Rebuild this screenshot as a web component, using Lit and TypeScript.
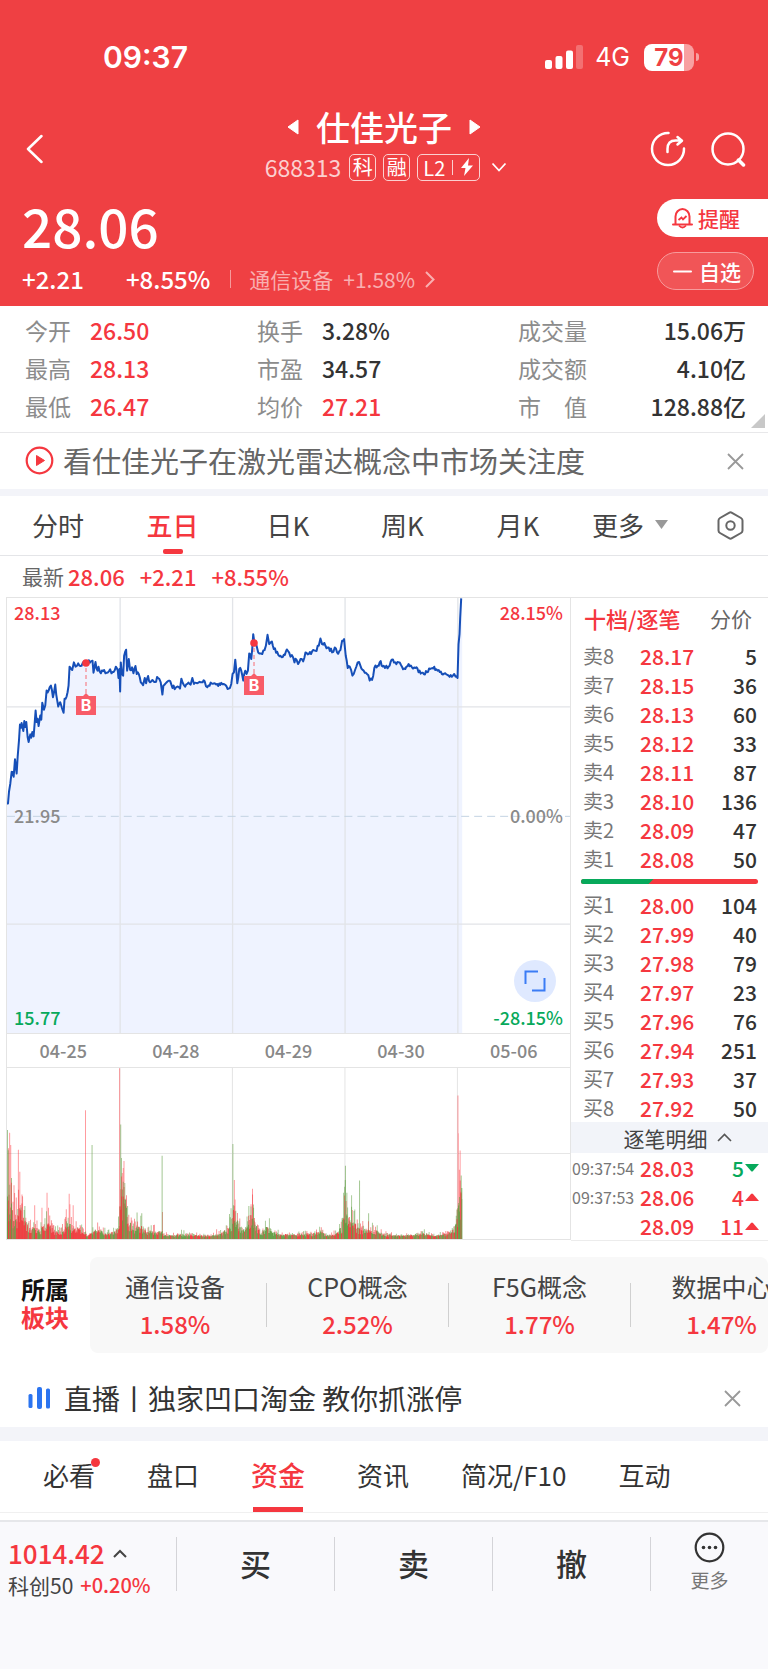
import { LitElement, html, css } from "lit";
import { customElement } from "lit/decorators.js";

type Point = [number, number];

/* Five-day price line, in thirds of a pixel of the plot. */
const PRICE: Point[] = [
  [18,640],[21,640],[24,605],[28,580],[32,545],[38,560],[42,507],[47,550],[50,500],[54,450],[57,402],[60,412],[62,398],[67,422],[70,392],[73,410],[76,395],[80,440],[83,455],[88,432],
  [91,442],[94,425],[98,438],[101,400],[104,360],[107,395],[110,385],[113,407],[118,375],[121,388],[124,337],[129,358],[133,345],[137,300],[143,300],[150,285],[156,320],[163,282],
  [166,312],[172,348],[178,335],[183,352],[188,367],[191,325],[197,318],[203,285],[206,228],[214,238],[219,215],[224,228],[232,218],[238,226],[246,216],[258,218],[270,212],[275,210],[278,246],
  [284,214],[290,240],[293,228],[300,248],[310,238],[318,246],[328,236],[332,248],[345,228],[351,240],[353,262],[356,235],[358,303],[360,215],[363,250],[367,255],[370,195],[376,177],
  [379,240],[384,205],[388,238],[394,230],[398,248],[404,226],[408,250],[414,250],[420,275],[427,284],[432,262],[436,278],[442,256],[448,275],[455,268],[460,274],[472,262],[480,275],
  [485,312],[488,285],[498,275],[505,270],[512,282],[522,296],[530,288],[538,294],[542,264],[550,284],[560,280],[570,282],[575,262],[580,280],[590,278],[600,275],[612,272],[620,290],
  [630,276],[650,280],[668,280],[684,294],[692,280],[696,250],[700,245],[704,207],[710,278],[716,235],[722,240],[728,270],[734,240],[738,250],[742,240],[746,188],[752,205],[758,130],[762,160],
  [768,165],[773,185],[780,188],[785,190],[792,178],[796,165],[801,132],[806,160],[814,152],[820,175],[830,183],[840,195],[850,192],[862,180],[870,198],[878,200],[882,215],[888,207],
  [893,220],[900,205],[908,212],[915,185],[925,190],[935,182],[945,180],[955,165],[960,143],[965,160],[975,165],[985,170],[995,185],[1003,170],[1010,185],[1020,178],[1025,150],[1031,145],
  [1036,195],[1042,232],[1048,228],[1056,255],[1060,250],[1064,238],[1072,215],[1080,225],[1090,240],[1100,250],[1108,270],[1115,268],[1122,232],[1132,225],[1138,215],[1150,225],[1158,225],
  [1165,228],[1174,207],[1185,215],[1195,215],[1205,228],[1215,235],[1225,220],[1235,230],[1245,232],[1258,240],[1268,246],[1280,245],[1290,235],[1302,228],[1312,240],[1325,250],[1335,248],
  [1345,255],[1358,255],[1366,258],[1372,262],[1375,160],[1378,130],[1380,80],[1383,22],
];

/* Base volume level along the time axis. */
const LEVEL: Point[] = [
  [18,150],[28,150],[35,80],[45,75],[50,150],[60,90],[70,60],[80,40],[95,40],[105,30],[115,40],[128,60],[140,40],[155,25],[170,30],[185,60],[200,40],[215,40],[225,35],[240,8],[252,30],[270,30],
  [290,20],[305,20],[320,40],[326,60],[330,230],[336,150],[342,160],[350,70],[365,45],[385,50],[400,30],[420,25],[440,30],[450,15],[470,12],[500,15],[530,12],[580,10],[610,20],[630,45],[638,60],
  [642,150],[650,75],[665,40],[675,30],[683,90],[694,100],[700,60],[715,20],[733,50],[745,25],[770,15],[850,15],[880,25],[900,12],[920,15],[940,45],[948,130],[958,80],[968,70],[985,35],[1005,40],
  [1030,30],[1060,12],[1130,12],[1160,20],[1200,10],[1235,20],[1250,50],[1258,90],[1262,180],[1268,180],[1272,180],
];

/* Single tall volume bars: x, height, rising or falling. */
const SPIKES: [number, number, "r" | "g"][] = [
  [19,330,"g"],[22,275,"r"],[25,322,"r"],[28,285,"r"],[30,185,"g"],[37,163,"r"],[49,270,"r"],[53,204,"r"],[59,135,"r"],[67,100,"g"],[94,102,"r"],[114,95,"r"],[128,140,"r"],[132,95,"r"],
  [181,90,"r"],[189,137,"r"],[191,105,"r"],[200,102,"r"],[234,390,"r"],[252,285,"g"],[328,517,"r"],[331,347,"g"],[333,245,"g"],[335,200,"r"],[340,236,"r"],[338,215,"r"],[345,122,"r"],
  [350,100,"g"],[376,80,"g"],[389,78,"g"],[445,252,"g"],[446,82,"r"],[640,288,"g"],[644,179,"r"],[646,120,"r"],[694,152,"r"],[690,105,"r"],[684,100,"g"],[697,95,"g"],[948,158,"g"],[950,222,"g"],
  [954,140,"g"],[967,98,"g"],[969,88,"r"],[989,177,"g"],[1014,78,"g"],[1258,90,"r"],[1260,435,"r"],[1261,320,"r"],[1266,268,"r"],[1264,210,"r"],[1269,192,"g"],
];

function noise(seed: number) {
  let s = seed;
  return () => ((s = (s * 16807) % 2147483647) / 2147483647);
}

function levelAt(x: number) {
  for (let i = 1; i < LEVEL.length; i++) {
    if (x <= LEVEL[i][0]) {
      const [x0, y0] = LEVEL[i - 1];
      const [x1, y1] = LEVEL[i];
      return y0 + ((y1 - y0) * (x - x0)) / (x1 - x0);
    }
  }
  return 0;
}

function priceLine() {
  const rnd = noise(7);
  const out: string[] = [];
  PRICE.forEach(([x, y], i) => {
    if (i > 0) {
      const [px, py] = PRICE[i - 1];
      const steps = Math.floor((x - px) / 3);
      for (let k = 1; k < steps; k++) {
        const t = k / steps;
        out.push(`${(px + (x - px) * t).toFixed(1)},${(py + (y - py) * t + (rnd() - 0.5) * 14).toFixed(1)}`);
      }
    }
    out.push(`${x},${y}`);
  });
  return out.join(" L");
}

function bar(x: number, h: number, w = 2) {
  return `M${x.toFixed(1)} 518v${(-h).toFixed(1)}h${w}v${h.toFixed(1)}z`;
}

function volumeBars() {
  const rnd = noise(41);
  const d = { r: "", g: "", R: "", G: "" };
  for (let x = 18; x < 1271; x += 2.2) {
    const h = levelAt(x);
    const warm = x < 240 ? 0.72 : 0.5;
    const tall = h * (0.6 + rnd() * rnd() * 1.3) + 2;
    const low = h * (0.3 + rnd() * 0.55) + 3;
    if (rnd() < warm) d.r += bar(x - 18, tall, 2.4);
    else d.g += bar(x - 18, tall, 2.4);
    if (rnd() < warm) d.R += bar(x - 18, low, 2.4);
    else d.G += bar(x - 18, low, 2.4);
  }
  return d;
}

const LINE = priceLine();
const BARS = volumeBars();
const SPIKE_R = SPIKES.filter((s) => s[2] === "r").map((s) => bar(s[0] - 19, s[1], 2.6)).join("");
const SPIKE_G = SPIKES.filter((s) => s[2] === "g").map((s) => bar(s[0] - 19, s[1], 2.6)).join("");

const STATS = [
  ["今开", "26.50", "up", "换手", "3.28%", "", "成交量", "15.06万"],
  ["最高", "28.13", "up", "市盈", "34.57", "", "成交额", "4.10亿"],
  ["最低", "26.47", "up", "均价", "27.21", "up", "市　值", "128.88亿"],
];
const SELLS = [["卖8","28.17","5"],["卖7","28.15","36"],["卖6","28.13","60"],["卖5","28.12","33"],["卖4","28.11","87"],["卖3","28.10","136"],["卖2","28.09","47"],["卖1","28.08","50"]];
const BUYS = [["买1","28.00","104"],["买2","27.99","40"],["买3","27.98","79"],["买4","27.97","23"],["买5","27.96","76"],["买6","27.94","251"],["买7","27.93","37"],["买8","27.92","50"]];
const TRADES = [["09:37:54","28.03","5","down"],["09:37:53","28.06","4","up"],["","28.09","11","up"]];
const SECTORS = [["通信设备","1.58%"],["CPO概念","2.52%"],["F5G概念","1.77%"],["数据中心","1.47%"]];

const shared = css`
  :host { display: block; }
  * { box-sizing: border-box; }
  button, a { font: inherit; color: inherit; background: none; border: 0; padding: 0; margin: 0; text-decoration: none; }
  button { cursor: pointer; }
  svg { display: block; flex: none; }
  .up { color: #f5373f; }
  .down { color: #07a95b; }
`;

@customElement("quote-header")
class QuoteHeader extends LitElement {
  static styles = [shared, css`
    :host { background: #ef4043; color: #fff; }
    .status { display: flex; align-items: center; padding: 40px 69px 0 103px; height: 74px; font-family: Inter, sans-serif; }
    .time { font-size: 30px; font-weight: 600; margin-right: auto; }
    .net { font-size: 25px; margin: 0 14px 0 12px; }
    .battery { display: flex; align-items: center; gap: 2px; }
    .cell { width: 50px; height: 27px; border-radius: 8px; background: linear-gradient(90deg, #fff 79%, #f8a0a1 79%); color: #ef4043; font-size: 24px; line-height: 27px; font-weight: 700; text-align: center; }
    .nub { width: 3px; height: 8px; border-radius: 0 3px 3px 0; background: #f8a0a1; }
    .bar { display: grid; grid-template-columns: 1fr auto 1fr; padding: 30px 22px 0 26px; height: 112px; }
    .side { display: flex; align-items: center; gap: 24px; padding-top: 8px; }
    .end { justify-content: flex-end; }
    .title { display: flex; justify-content: center; align-items: center; gap: 17px; margin: 0; padding-right: 4px; font-size: 34px; line-height: 46px; font-weight: 500; }
    .sub { display: flex; align-items: center; gap: 7px; height: 34px; font-size: 23px; line-height: 32px; }
    .code { color: #fbd0d0; margin-right: 1px; }
    .tag { border: 1px solid #fbd0d0; border-radius: 5px; height: 27px; width: 27px; font-size: 20px; line-height: 23px; text-align: center; }
    .wide { display: flex; align-items: center; justify-content: center; gap: 7px; width: 63px; }
    .rule { width: 1px; height: 15px; background: #fbd0d0; }
    .sub svg { margin-left: 4px; }
    .wide svg { margin: 0; }
    .quote { display: flex; justify-content: space-between; height: 120px; padding: 7px 0 0 22px; }
    .price { font-size: 53px; line-height: 64px; font-weight: 500; }
    .change { display: flex; align-items: center; font-size: 24px; line-height: 34px; margin-top: 5px; font-weight: 500; }
    .pct { margin-left: 42px; }
    .sep { width: 1px; height: 18px; background: #f69a9b; margin: 0 18px 0 20px; }
    .sector { display: flex; align-items: center; gap: 10px; color: #f9afb0; font-size: 21px; font-weight: 400; }
    .acts { display: flex; flex-direction: column; gap: 15px; padding-top: 6px; width: 111px; }
    .act { display: flex; align-items: center; height: 38px; font-size: 21px; line-height: 34px; font-weight: 500; }
    .remind { background: #fff; color: #f5373f; border-radius: 19px 0 0 19px; padding-left: 15px; gap: 5px; }
    .fav { width: 97px; border: 1px solid #f79b9c; border-radius: 19px; background: #f15557; padding-left: 15px; gap: 7px; }
  `];
  render() {
    return html`
      <div class="status">
        <span class="time">09:37</span>
        <svg width="38" height="24" viewBox="0 0 38 24" fill="#fff"><rect y="15" width="7" height="9" rx="2"/><rect x="10.5" y="11" width="7" height="13" rx="2"/><rect x="21" y="5.5" width="7" height="18.5" rx="2"/><rect x="31" width="7" height="24" rx="2" opacity=".25"/></svg>
        <span class="net">4G</span>
        <span class="battery"><span class="cell">79</span><span class="nub"></span></span>
      </div>
      <div class="bar">
        <div class="side">
          <button aria-label="返回"><svg width="17" height="30" viewBox="0 0 17 30" fill="none" stroke="#fff" stroke-width="2.5" stroke-linecap="round" stroke-linejoin="round"><path d="M15.5 2L2 15l13.5 13"/></svg></button>
        </div>
        <div>
          <h1 class="title">
            <button aria-label="上一只"><svg width="12" height="16" viewBox="0 0 12 16" fill="#fff" stroke="#fff" stroke-linejoin="round"><path d="M11 1v14L1 8z"/></svg></button>
            仕佳光子
            <button aria-label="下一只"><svg width="12" height="16" viewBox="0 0 12 16" fill="#fff" stroke="#fff" stroke-linejoin="round"><path d="M1 1v14l10-7z"/></svg></button>
          </h1>
          <div class="sub">
            <span class="code">688313</span><span class="tag">科</span><span class="tag">融</span>
            <span class="tag wide">L2<span class="rule"></span><svg width="14" height="18" viewBox="0 0 14 18" fill="#fff"><path d="M9 0L1 10h4.5L4 18l9-10.5H8z"/></svg></span>
            <svg width="16" height="10" viewBox="0 0 16 10" fill="none" stroke="#fff" stroke-width="1.8"><path d="M1.5 1.5L8 8.5l6.5-7"/></svg>
          </div>
        </div>
        <div class="side end">
          <button aria-label="分享"><svg width="36" height="36" viewBox="0 0 36 36" fill="none" stroke="#fff" stroke-width="2.5" stroke-linecap="round" stroke-linejoin="round"><path d="M18.5 2A16 16 0 1 0 34 17.5"/><path d="M17.5 21v-3c0-6 3-8.5 8-8.5h6M27.5 6l4.5 3.7-4.5 3.8"/></svg></button>
          <button aria-label="搜索"><svg width="36" height="36" viewBox="0 0 36 36" fill="none" stroke="#fff" stroke-width="2.5"><circle cx="18" cy="18" r="15.5"/><path d="M28.5 29l5 5" stroke-width="3.5" stroke-linecap="round"/></svg></button>
        </div>
      </div>
      <div class="quote">
        <div>
          <div class="price">28.06</div>
          <div class="change"><span>+2.21</span><span class="pct">+8.55%</span><span class="sep"></span>
            <a class="sector" href="#sector"><span>通信设备</span><span>+1.58%</span><svg width="10" height="17" viewBox="0 0 10 17" fill="none" stroke="#f9afb0" stroke-width="2"><path d="M1 1l7.5 7.5L1 16"/></svg></a>
          </div>
        </div>
        <div class="acts">
          <button class="act remind"><svg width="21" height="22" viewBox="0 0 21 22" fill="none" stroke="#f5373f" stroke-width="2"><path d="M1 17.5h19M3.5 17V9.500a7 7.5 0 0 1 14 0V17" stroke-linecap="round"/><path d="M7 18.5q3.5 4 7 0M6.5 13l3-2.5 1.5 2 3.500-3.500" stroke-width="1.8"/></svg>提醒</button>
          <button class="act fav"><svg width="19" height="3" viewBox="0 0 19 3"><path d="M1 1.5h17" stroke="#fff" stroke-width="2" stroke-linecap="round"/></svg>自选</button>
        </div>
      </div>`;
  }
}

@customElement("quote-stats")
class QuoteStats extends LitElement {
  static styles = [shared, css`
    .stats { position: relative; padding: 5px 22px 7px 25px; border-bottom: 1px solid #e8e8ea; }
    .table { width: 100%; border-collapse: collapse; font-size: 23px; line-height: 36px; color: #333; }
    .table th, .table td { padding: 0; height: 38px; }
    .table th { text-align: left; font-weight: 400; color: #8c8c8c; width: 65px; }
    .table .third { width: 82px; }
    .table td { font-weight: 500; width: 167px; }
    .table .up { color: #f5373f; }
    .table .mid { width: 196px; }
    .table .last { width: auto; text-align: right; }
    .corner { position: absolute; right: 3px; bottom: 4px; }
    .news { display: flex; align-items: center; height: 56px; padding: 0 24px 0 25px; font-size: 29px; color: #666; }
    .news a { flex: 1; display: flex; align-items: center; gap: 9px; line-height: 52px; padding-bottom: 2px; }
  `];
  render() {
    return html`
      <div class="stats">
        <table class="table">
          ${STATS.map((r) => html`<tr>
            <th scope="row">${r[0]}</th><td class=${r[2]}>${r[1]}</td>
            <th scope="row">${r[3]}</th><td class="mid ${r[5]}">${r[4]}</td>
            <th scope="row" class="third">${r[6]}</th><td class="last">${r[7]}</td></tr>`)}
        </table>
        <svg class="corner" width="14" height="14" viewBox="0 0 14 14" fill="#c8c8c8"><path d="M14 0v14H0z"/></svg>
      </div>
      <div class="news">
        <a href="#news"><svg width="29" height="29" viewBox="0 0 29 29"><circle cx="14.5" cy="14.5" r="12.8" fill="none" stroke="#f5373f" stroke-width="2.2"/><path d="M11.5 9.500v10l8-5z" fill="#f5373f" stroke="#f5373f" stroke-linejoin="round"/></svg>看仕佳光子在激光雷达概念中市场关注度</a>
        <button aria-label="关闭"><svg width="17" height="17" viewBox="0 0 17 17" stroke="#999" stroke-width="1.8"><path d="M1 1l15 15M16 1L1 16"/></svg></button>
      </div>`;
  }
}

@customElement("price-chart")
class PriceChart extends LitElement {
  static styles = [shared, css`
    .plot { position: relative; height: 437px; border: 1px solid #e4e4e4; }
    .draw { width: 100%; height: 100%; }
    .tag { position: absolute; font-size: 18px; line-height: 24px; font-weight: 500; }
    .tl { left: 7px; top: 2px; }
    .tr { right: 7px; top: 2px; }
    .ml { left: 7px; top: 205px; color: #8a8a8a; }
    .mr { right: 7px; top: 205px; color: #8a8a8a; }
    .bl { left: 7px; bottom: 4px; }
    .br { right: 7px; bottom: 4px; }
    .mark { position: absolute; transform: translateX(-50%); }
    .full { position: absolute; right: 14px; bottom: 31px; width: 42px; height: 42px; border-radius: 50%; background: #dfe9ff; display: grid; place-items: center; }
    .axis { display: grid; grid-template-columns: repeat(5, 1fr); height: 33px; border: 1px solid #e4e4e4; border-width: 0 1px; text-align: center; font-size: 18px; line-height: 32px; color: #888; font-weight: 500; }
    .vol { height: 173px; border: 1px solid #e4e4e4; }
  `];
  marker(left: number, top: number) {
    return html`<svg class="mark" style="left:${left}%;top:${top}px" width="20" height="56" viewBox="0 0 20 56">
      <circle cx="10" cy="4" r="3.8" fill="#f5373f"/><path d="M10 9v26" stroke="#f76a72" stroke-dasharray="4 3"/>
      <path d="M0 37h7l3-3 3 3h7v19H0z" fill="#f85c68"/>
      <text x="10" y="52" text-anchor="middle" font-size="16" font-weight="700" fill="#fff" font-family="Inter, sans-serif">B</text></svg>`;
  }
  render() {
    return html`
      <div class="plot">
        <svg class="draw" viewBox="18 21 1692 1311" preserveAspectRatio="none">
          <path d="M${LINE} L1386,22 V1332 H18z" fill="#eff3ff"/>
          <path d="M358 21V1332M696 21V1332M1034 21V1332M1373 21V1332M18 349H1710M18 1004H1710" fill="none" stroke="#e2e4e8" stroke-width="4"/>
          <path d="M18 679H1710" stroke="#c3d3e2" stroke-width="3" stroke-dasharray="24 15"/>
          <path d="M${LINE}" fill="none" stroke="#164fb8" stroke-width="6" stroke-linejoin="round"/>
        </svg>
        <span class="tag tl up">28.13</span><span class="tag tr up">28.15%</span>
        <span class="tag ml">21.95</span><span class="tag mr">0.00%</span>
        <span class="tag bl down">15.77</span><span class="tag br down">-28.15%</span>
        ${this.marker(14.1, 61)}${this.marker(43.8, 41)}
        <button class="full" aria-label="全屏"><svg width="22" height="22" viewBox="0 0 22 22" fill="none" stroke="#3b7cf5" stroke-width="2"><path d="M1.5 14V1.5H14M20.5 8v12.5H8"/></svg></button>
      </div>
      <div class="axis"><span>04-25</span><span>04-28</span><span>04-29</span><span>04-30</span><span>05-06</span></div>
      <div class="vol">
        <svg class="draw" viewBox="0 0 1551 518" preserveAspectRatio="none">
          <path d="M311 0V518M621 0V518M931 0V518M1241 0V518M0 259H1551" stroke="#e6e6e6" stroke-width="3"/>
          <path d=${SPIKE_R} fill="#ff2d35" opacity=".5"/><path d=${SPIKE_G} fill="#5d9c3f" opacity=".6"/>
          <path d=${BARS.r} fill="#f0353a" opacity=".6"/><path d=${BARS.g} fill="#5d9c3f" opacity=".6"/>
          <path d=${BARS.R} fill="#f0353a" opacity=".85"/><path d=${BARS.G} fill="#5d9c3f" opacity=".85"/>
        </svg>
      </div>`;
  }
}

@customElement("order-book")
class OrderBook extends LitElement {
  static styles = [shared, css`
    :host { border-top: 1px solid #e4e4e4; border-bottom: 1px solid #ececec; font-size: 21px; }
    .head { display: flex; align-items: center; justify-content: space-between; height: 43px; padding: 0 16px 4px 13px; color: #666; }
    .head .on { color: #f5373f; font-weight: 500; font-size: 22px; }
    .book { width: 100%; border-collapse: collapse; table-layout: fixed; line-height: 28px; }
    .book th, .book td { padding: 0; height: 29px; }
    .book th { width: 69px; padding-left: 12px; text-align: left; font-weight: 400; font-size: 20px; color: #777; }
    .book td { color: #f5373f; font-weight: 500; }
    .book .qty { color: #333; text-align: right; padding-right: 11px; }
    .book .time { font-size: 16px; padding-left: 1px; }
    .ratio { display: flex; height: 5px; margin: 6px 10px; border-radius: 3px; overflow: hidden; background: #f5373f; }
    .in { background: #07a95b; clip-path: polygon(0 0, 100% 0, calc(100% - 5px) 100%, 0 100%); }
    .detail { display: flex; align-items: center; justify-content: center; gap: 9px; width: 100%; height: 31px; line-height: 28px; background: #f2f4f9; color: #444; padding-left: 16px; }
    .book .tick { padding-right: 9px; text-align: right; }
    .book .down { color: #07a95b; }
    .tick svg { display: inline-block; vertical-align: 5px; margin-left: 1px; }
  `];
  rows(list: string[][]) {
    return html`<table class="book">${list.map((r) => html`<tr><th scope="row">${r[0]}</th><td>${r[1]}</td><td class="qty">${r[2]}</td></tr>`)}</table>`;
  }
  render() {
    return html`
      <div class="head"><button class="on">十档/逐笔</button><button>分价</button></div>
      ${this.rows(SELLS)}
      <div class="ratio"><span class="in" style="width:41%"></span></div>
      ${this.rows(BUYS)}
      <button class="detail">逐笔明细<svg width="15" height="9" viewBox="0 0 15 9" fill="none" stroke="#555" stroke-width="1.6"><path d="M1 8l6.5-6.5L14 8"/></svg></button>
      <table class="book">
        ${TRADES.map((r) => html`<tr><th scope="row" class="time">${r[0]}</th><td>${r[1]}</td><td class="tick ${r[3]}">${r[2]}<svg width="14" height="8" viewBox="0 0 14 8" fill="currentColor"><path d=${r[3] === "up" ? "M0 8L6 1q1-1 2 0l6 7z" : "M0 0h14L8 7q-1 1-2 0z"}/></svg></td></tr>`)}
      </table>`;
  }
}

@customElement("app-root")
class AppRoot extends LitElement {
  static styles = [shared, css`
    :host { display: flex; flex-direction: column; font-family: "Noto Sans CJK SC", "Noto Sans", sans-serif; background: #fff; color: #333; min-height: 100vh; overflow: hidden; }
    .band { background: #f3f4f9; height: 7px; }
    .thick { height: 14px; }
    .periods { display: grid; grid-template-columns: 116px 113px 118px 111px 120px 1fr 72px; align-items: stretch; height: 60px; border-bottom: 1px solid #e4e5e8; font-size: 26px; line-height: 56px; color: #444; }
    .tab { position: relative; padding-bottom: 2px; }
    .periods .on { color: #f5373f; font-weight: 500; }
    .periods .on::after { content: ""; position: absolute; left: 50%; bottom: 1px; width: 20px; height: 5px; margin-left: -10px; border-radius: 2px; background: #f5373f; }
    .more { display: flex; align-items: center; gap: 11px; padding: 0 0 2px 14px; }
    .gear { display: flex; align-items: center; justify-content: center; padding-right: 4px; }
    .latest { display: flex; align-items: center; height: 41px; padding: 0 0 2px 22px; font-size: 22px; line-height: 38px; font-weight: 500; }
    .latest .name { font-size: 21px; font-weight: 400; color: #666; margin-right: 4px; }
    .latest .gap { margin-left: 15px; }
    .market { display: grid; grid-template-columns: minmax(0, 1fr) 197px; padding-left: 6px; }
    .boards { display: flex; align-items: center; padding-top: 16px; }
    .boards h2 { margin: 0; width: 90px; padding-bottom: 4px; text-align: center; font-size: 24px; line-height: 28px; color: #111; font-weight: 700; }
    .strip { flex: 1; min-width: 0; display: flex; overflow: hidden; height: 96px; border-radius: 8px; background: #f8f8f8; align-items: center; }
    .board { flex: none; width: 182px; text-align: center; font-size: 24px; line-height: 37px; height: 44px; display: flex; flex-direction: column; justify-content: center; border-left: 1px solid #d0d0d0; white-space: nowrap; color: #444; }
    .board:first-child { border: 0; width: 176px; padding-right: 6px; }
    .board .name { font-size: 25px; }
    .board .up { color: #f5373f; font-weight: 500; }
    .live { display: flex; align-items: center; justify-content: space-between; height: 74px; padding: 16px 27px 0 28px; font-size: 28px; line-height: 54px; color: #333; }
    .live a { display: flex; align-items: center; gap: 13px; }
    .sections { display: flex; gap: 52px; height: 72px; padding: 0 0 0 43px; border-bottom: 1px solid #f0f0f0; font-size: 26px; line-height: 66px; color: #333; }
    .sections .tab { padding-bottom: 4px; }
    .sections .on { color: #f5373f; font-weight: 500; font-size: 27px; }
    .sections .on::after { content: ""; position: absolute; left: 2px; right: 2px; bottom: 0; height: 5px; background: #f5373f; }
    .dot { position: absolute; right: -5px; top: 17px; width: 9px; height: 9px; border-radius: 50%; background: #f5373f; }
    .foot { flex: 1; display: grid; align-content: start; grid-template-columns: 176px 1fr 1fr 1fr 118px; margin-top: 7px; padding: 15px 0 60px; border-top: 2px solid #e6e7ea; background: #f9f9fc; }
    .index { padding-left: 8px; height: 63px; line-height: 32px; font-size: 20px; text-align: left; white-space: nowrap; }
    .index .num { display: flex; align-items: center; gap: 8px; font-size: 26px; font-weight: 500; color: #f5373f; }
    .index .name { display: flex; gap: 7px; color: #444; font-size: 21px; }
    .index .up { color: #f5373f; font-weight: 500; font-size: 20px; }
    .do { height: 54px; line-height: 50px; padding-bottom: 2px; border-left: 1px solid #d4d4d8; font-size: 31px; font-weight: 500; }
    .other { display: flex; flex-direction: column; align-items: center; height: 54px; border-left: 1px solid #d4d4d8; font-size: 19px; line-height: 26px; gap: 4px; color: #777; }
    .other svg { margin-top: -5px; }
  `];
  render() {
    return html`
      <quote-header></quote-header>
      <quote-stats></quote-stats>
      <div class="band"></div>
      <nav class="periods">
        <button class="tab">分时</button><button class="tab on">五日</button><button class="tab">日K</button><button class="tab">周K</button><button class="tab">月K</button>
        <button class="more">更多<svg width="13" height="9" viewBox="0 0 13 9" fill="#999"><path d="M0 0h13L6.5 9z"/></svg></button>
        <button class="gear" aria-label="设置"><svg width="27" height="29" viewBox="0 0 27 29" fill="none" stroke="#666" stroke-width="2"><path d="M12 1.8q1.5-.9 3 0l9 5.2q1.5.9 1.5 2.5v10q0 1.6-1.5 2.5l-9 5.2q-1.5.9-3 0L3 22q-1.5-.9-1.5-2.5v-10Q1.5 7.9 3 7z"/><circle cx="13.5" cy="14.5" r="4.2"/></svg></button>
      </nav>
      <div class="latest"><span class="name">最新</span><span class="up">28.06</span><span class="up gap">+2.21</span><span class="up gap">+8.55%</span></div>
      <div class="market"><price-chart></price-chart><order-book></order-book></div>
      <div class="boards">
        <h2>所属<br /><span class="up">板块</span></h2>
        <div class="strip">${SECTORS.map((s) => html`<a class="board" href="#board"><span class="name">${s[0]}</span><span class="up">${s[1]}</span></a>`)}</div>
      </div>
      <div class="live">
        <a href="#live"><svg width="23" height="22" viewBox="0 0 23 22" fill="#2b74f0"><rect x="0.5" y="7" width="4" height="14" rx="1.5"/><rect x="9" y="0" width="5" height="22" rx="2"/><rect x="18" y="1.5" width="4" height="20" rx="1.5"/></svg>直播丨独家凹口淘金 教你抓涨停</a>
        <button aria-label="关闭"><svg width="17" height="17" viewBox="0 0 17 17" stroke="#999" stroke-width="1.8"><path d="M1 1l15 15M16 1L1 16"/></svg></button>
      </div>
      <div class="band thick"></div>
      <nav class="sections">
        <button class="tab">必看<span class="dot"></span></button><button class="tab">盘口</button><button class="tab on">资金</button><button class="tab">资讯</button><button class="tab">简况/F10</button><button class="tab">互动</button>
      </nav>
      <footer class="foot">
        <button class="index"><span class="num">1014.42<svg width="14" height="9" viewBox="0 0 14 9" fill="none" stroke="#444" stroke-width="2"><path d="M1 8l6-6 6 6"/></svg></span><span class="name">科创50<span class="up">+0.20%</span></span></button>
        <button class="do">买</button><button class="do">卖</button><button class="do">撤</button>
        <button class="other"><svg width="31" height="31" viewBox="0 0 31 31"><circle cx="15.5" cy="15.5" r="13.8" fill="none" stroke="#333" stroke-width="2.2"/><g fill="#333"><circle cx="9.5" cy="15.5" r="1.8"/><circle cx="15.5" cy="15.5" r="1.8"/><circle cx="21.5" cy="15.5" r="1.8"/></g></svg>更多</button>
      </footer>`;
  }
}
